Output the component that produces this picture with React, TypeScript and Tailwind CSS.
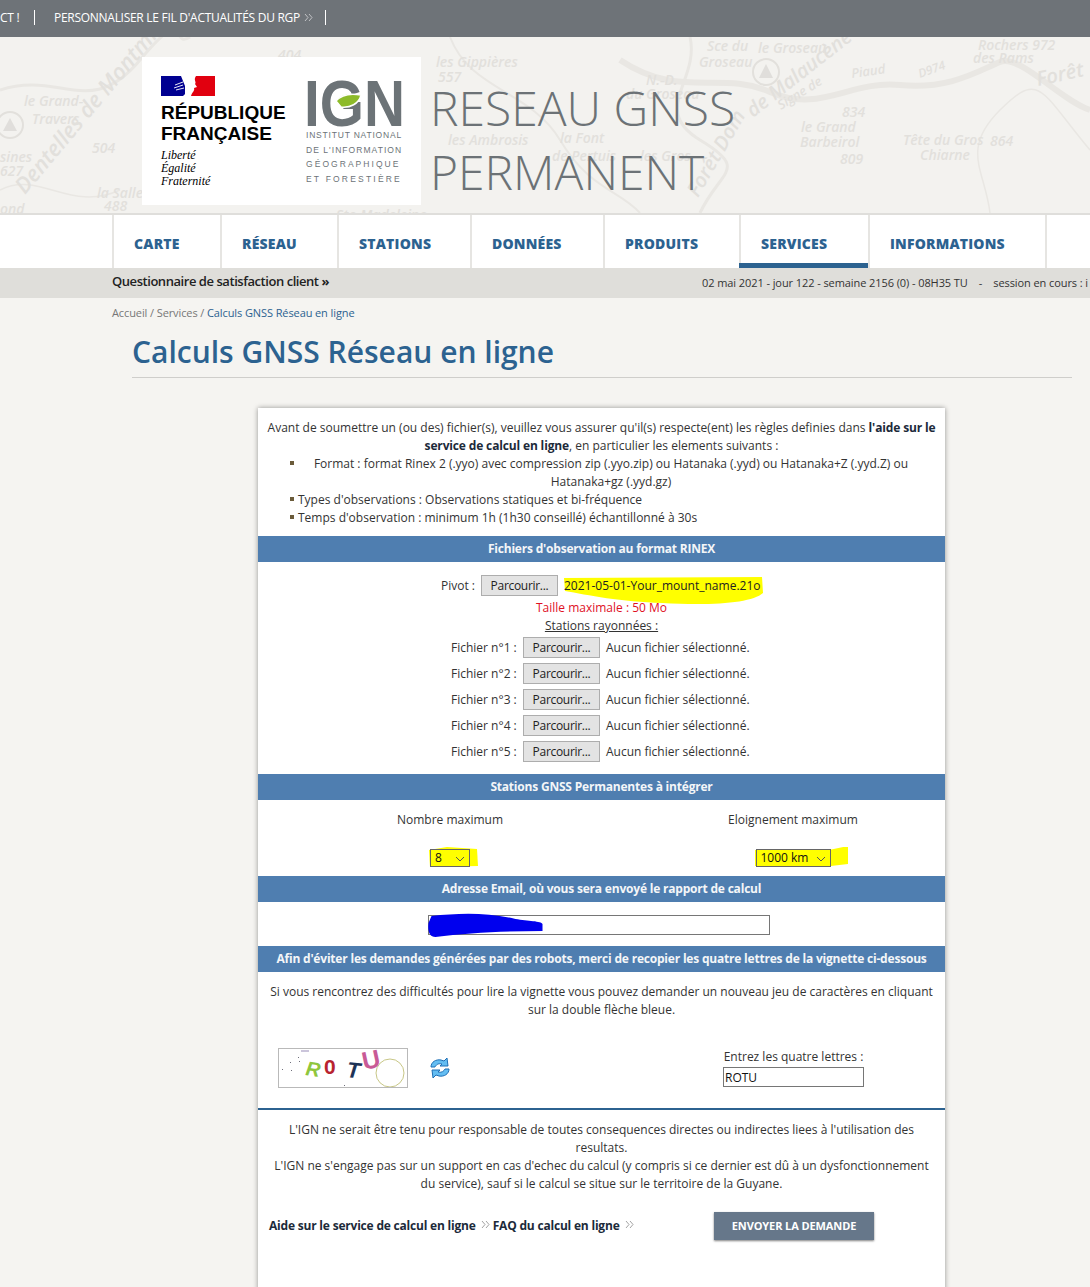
const navItems = [
  { label: "CARTE", width: "w-[108px]" },
  { label: "RÉSEAU", width: "w-[117px]" },
  { label: "STATIONS", width: "w-[133px]" },
  { label: "DONNÉES", width: "w-[133px]" },
  { label: "PRODUITS", width: "w-[136px]" },
  { label: "SERVICES", width: "w-[129px]", active: true },
  { label: "INFORMATIONS", width: "w-[177px]" },
];

const mapLabels: [string, number, number, number?, number?][] = [
  ["le Grand-", 24, 106],
  ["Travers", 32, 124],
  ["Dentelles de Montmirail", 25, 195, -50, 22],
  ["504", 92, 153],
  ["sines", 0, 162],
  ["627", 0, 176],
  ["la Salle", 97, 198],
  ["488", 104, 211],
  ["ond", 0, 214],
  ["404", 278, 60],
  ["les Gippières", 436, 67],
  ["557", 438, 82],
  ["les Ambrosis", 448, 145],
  ["la Font", 560, 143],
  ["de Pertuis", 552, 161],
  ["les Gros", 640, 161],
  ["N.-D.", 646, 85],
  ["du Groseau", 626, 99],
  ["Sce du", 707, 51],
  ["Groseau", 699, 67],
  ["le Groseau", 758, 53],
  ["de Malaucène", 753, 118, -38, 20],
  ["Signe de", 781, 110, -32, 13],
  ["Forêt Dom", 698, 198, -60, 20],
  ["Piaud", 852, 78, -8, 13],
  ["D974", 920, 78, -20, 12],
  ["Rochers 972", 978, 50],
  ["des Rams", 973, 63],
  ["Forêt", 1038, 86, -12, 20],
  ["834", 842, 117],
  ["le Grand", 801, 132],
  ["Barbeirol", 800, 147],
  ["809", 840, 164],
  ["Tête du Gros", 903, 145],
  ["Chiarne", 920, 160],
  ["864", 990, 146],
  ["Ste-Madeleine", 336, 220],
];

const fileRows = [1, 2, 3, 4, 5];

function MapBackground() {
  return (
    <svg className="absolute inset-0 h-full w-full" viewBox="0 37 1090 176" preserveAspectRatio="none">
      <rect x="0" y="37" width="1090" height="176" fill="#f3f2ef" />
      <g fill="none" stroke="#e9e7e3" strokeWidth="3">
        <path d="M0 90 C60 70 90 120 140 60 S170 50 190 37" />
        <path d="M620 60 C680 100 720 70 770 92 S850 80 900 85 S980 70 1000 62 S1060 100 1090 110" strokeWidth="6" />
        <path d="M690 37 C700 80 650 110 700 140 S720 170 700 213" />
        <path d="M990 213 C985 170 960 150 1000 110 S1040 90 1090 150" strokeWidth="1.5" />
        <path d="M450 37 C470 90 530 90 560 140 S620 190 640 213" strokeWidth="2" />
        <path d="M0 190 C40 170 70 213 120 190" strokeWidth="1.5" />
      </g>
      <g fill="none" stroke="#e2e0dc" strokeWidth="2">
        <circle cx="766" cy="72" r="13" />
        <circle cx="10" cy="125" r="13" />
      </g>
      <path d="M759 78 L766 64 L773 78 Z" fill="#e0dedb" />
      <path d="M3 131 L10 118 L17 131 Z" fill="#e0dedb" />
      <g fill="#e2e0dc" fontFamily="'Open Sans', sans-serif" fontStyle="italic" fontWeight="600">
        {mapLabels.map(([text, x, y, angle, size]) => (
          <text key={text + x} x={x} y={y} fontSize={size ?? 14} transform={angle ? `rotate(${angle} ${x} ${y})` : undefined}>
            {text}
          </text>
        ))}
      </g>
    </svg>
  );
}

function DoubleChevron({ color = "#c9cbcd" }: { color?: string }) {
  return (
    <svg width="9" height="9" viewBox="0 0 9 9" fill="none" stroke={color} strokeWidth="0.9" className="inline-block shrink-0">
      <path d="M1 1 L4 4.5 L1 8" />
      <path d="M5 1 L8 4.5 L5 8" />
    </svg>
  );
}

function RfLogo() {
  return (
    <div className="w-[145px] shrink-0">
      <svg width="54" height="20" viewBox="0 0 54 20" className="block">
        <rect x="0" y="0" width="24" height="20" fill="#000091" />
        <rect x="28" y="0" width="26" height="20" fill="#e1000f" />
        <path d="M20 0 H35 C32 4 36 6 34 8 L36 11 L33 12 C34 15 31 16 30 20 H22 C27 16 27 12 24 10 Z" fill="#ffffff" />
        <path d="M14 9 L22 6 M13 12 L22 9 M15 14 L23 12" stroke="#ffffff" strokeWidth="0.9" />
      </svg>
      <div className="mt-[6px] text-[19px] font-bold leading-[21px] text-black font-['Liberation_Sans',sans-serif]">
        RÉPUBLIQUE
        <br />
        FRANÇAISE
      </div>
      <div className="mt-[5px] text-[12px] italic leading-[13px] text-black font-['Liberation_Serif',serif]">
        Liberté
        <br />
        Égalité
        <br />
        Fraternité
      </div>
    </div>
  );
}

function IgnLogo() {
  return (
    <div className="w-[97px] shrink-0 pt-[3px]">
      <svg width="97" height="48" viewBox="0 0 97 48" className="block overflow-visible">
        <text x="-2" y="47" fontSize="64" fontWeight="700" fill="#6c7377" fontFamily="'Liberation Sans', sans-serif" textLength="101" lengthAdjust="spacingAndGlyphs">
          IGN
        </text>
        <path d="M30 22 C36 15 44 14 55 16 C53 25 44 29 35 28 Z" fill="#8dbb2a" />
        <path d="M30 22 C36 15 44 14 55 16 C53 25 44 29 35 28 Z" fill="none" stroke="#ffffff" strokeWidth="1.5" />
      </svg>
      <div className="mt-[2px] flex flex-col gap-[2.6px] whitespace-nowrap text-[8.5px] leading-[12px] text-[#6c7377] font-['Liberation_Sans',sans-serif]">
        <span className="tracking-[0.8px]">INSTITUT NATIONAL</span>
        <span className="tracking-[1.05px]">DE L'INFORMATION</span>
        <span className="tracking-[2.05px]">GÉOGRAPHIQUE</span>
        <span className="tracking-[2.2px]">ET FORESTIÈRE</span>
      </div>
    </div>
  );
}

function Band({ children }: { children: React.ReactNode }) {
  return (
    <div className="flex h-[26px] items-center justify-center whitespace-nowrap bg-[#4f7eb0] text-[12px] font-bold tracking-[-0.2px] text-[#f4f6f8]">
      {children}
    </div>
  );
}

function BrowseButton() {
  return (
    <button className="h-[21px] w-[77px] shrink-0 border border-[#adadad] bg-[#e3e3e3] text-[12px] leading-none tracking-[-0.3px] text-[#222]">
      Parcourir...
    </button>
  );
}

function Bullet() {
  return <span className="mt-[6px] h-[4px] w-[4px] shrink-0 bg-[#6b5b3a]" />;
}

function Chevron() {
  return (
    <svg className="pointer-events-none absolute right-[5px] top-[7px]" width="10" height="6" viewBox="0 0 10 6" fill="none" stroke="#555" strokeWidth="1">
      <path d="M1 1 L5 5 L9 1" />
    </svg>
  );
}

function YellowSelect({ value, width }: { value: string; width: string }) {
  return (
    <div className={`relative h-[18px] ${width}`}>
      <select className="h-full w-full appearance-none border border-[#666] bg-[#ffff00] pl-[4px] text-[12px] leading-none text-[#111] outline-none" defaultValue={value}>
        <option>{value}</option>
      </select>
      <Chevron />
    </div>
  );
}

function Captcha() {
  return (
    <div className="h-[40px] w-[130px] shrink-0 border border-[#b9b9b9] bg-white">
      <svg width="128" height="38" viewBox="0 0 128 38" className="block">
        <circle cx="111" cy="24" r="14" fill="none" stroke="#b9b867" strokeWidth="0.8" />
        <path d="M22 2 H30" stroke="#6a5a9a" strokeWidth="0.7" />
        <g fill="#334" opacity="0.7">
          <rect x="11" y="13" width="1" height="1" />
          <rect x="19" y="8" width="1" height="1" />
          <rect x="20" y="12" width="1" height="1" />
          <rect x="3" y="20" width="1" height="1" />
          <rect x="12" y="21" width="1" height="1" />
          <rect x="65" y="36" width="1" height="1" />
        </g>
        <g fontFamily="'Liberation Sans', sans-serif" fontWeight="700" fontStyle="italic">
          <text x="26" y="26" fontSize="20" fill="#8fc63d" transform="rotate(8 26 26)">R</text>
          <text x="45" y="25" fontSize="21" fill="#b8232f" fontStyle="normal">0</text>
          <text x="67" y="28" fontSize="22" fill="#1d3357" transform="rotate(6 67 28)">T</text>
          <text x="85" y="21" fontSize="25" fill="#c85a96" fontStyle="normal" transform="rotate(-12 85 21)">U</text>
        </g>
      </svg>
    </div>
  );
}

function RefreshIcon() {
  return (
    <svg width="22" height="22" viewBox="0 0 22 22" className="shrink-0">
      <g fill="#63bdf2" stroke="#1f6fb5" strokeWidth="1" strokeLinejoin="round">
        <path d="M2 10 C2 5 7 2 12 3 L15 4 L18 1 L19 9 L11 9 L13 7 C9 6 7 8 6 10 Z" />
        <path d="M20 12 C20 17 15 20 10 19 L7 18 L4 21 L3 13 L11 13 L9 15 C13 16 15 14 16 12 Z" />
      </g>
    </svg>
  );
}

export default function App() {
  return (
    <div className="h-[1287px] w-[1090px] overflow-hidden bg-[#f5f4f1] font-['Open_Sans',sans-serif] text-[12px] leading-[18px] text-[#333]">
      <div className="flex h-[37px] items-center bg-[#6e7378] pb-[2px] text-[12px] tracking-[-0.28px] text-white">
        <span className="w-[34px] whitespace-nowrap">CT !</span>
        <span className="h-[15px] w-px bg-white" />
        <span className="ml-[19px] flex items-center gap-[4px] whitespace-nowrap">
          PERSONNALISER LE FIL D'ACTUALITÉS DU RGP <DoubleChevron />
        </span>
        <span className="ml-[12px] h-[15px] w-px bg-white" />
      </div>

      <header className="relative h-[176px]">
        <MapBackground />
        <div className="relative flex pl-[142px] pt-[20px]">
          <div className="flex h-[148px] w-[279px] bg-white pl-[19px] pt-[19px]">
            <RfLogo />
            <IgnLogo />
          </div>
          <h1 className="ml-[9px] mt-[19px] text-[48px] font-light leading-[64px] text-[#6c7276]">
            RESEAU GNSS
            <br />
            PERMANENT
          </h1>
        </div>
      </header>

      <nav className="flex h-[55px] border-t-2 border-[#dfdedb] bg-white pl-[112px]">
        {navItems.map((item) => (
          <div key={item.label} className={`relative flex ${item.width} items-center border-l-2 border-[#e6e5e2] pl-[20px] pt-[4px]`}>
            <span className="text-[14px] font-extrabold tracking-[0.2px] text-[#2c6290]">{item.label}</span>
            {item.active && <span className="absolute -left-[2px] right-0 bottom-0 h-[5px] bg-[#2c6290]" />}
          </div>
        ))}
        <div className="border-l-2 border-[#e6e5e2]" />
      </nav>

      <div className="flex h-[30px] items-center whitespace-nowrap bg-[#dfdeda] pl-[112px]">
        <span className="-mt-[4px] w-[590px] shrink-0 text-[13px] font-semibold tracking-[-0.45px] text-[#222]">
          Questionnaire de satisfaction client <span className="font-bold">»</span>
        </span>
        <span className="text-[11px] tracking-[-0.08px] text-[#333]">
          02 mai 2021 - jour 122 - semaine 2156 (0) - 08H35 TU
          <span className="mx-[11px]">-</span>
          session en cours : i
        </span>
      </div>

      <div className="pl-[112px] pt-[6px] text-[11px] leading-[18px] tracking-[-0.1px] text-[#777]">
        Accueil / Services / <span className="text-[#2c6290]">Calculs GNSS Réseau en ligne</span>
      </div>

      <h2 className="ml-[132px] mr-[18px] mt-[9px] border-b border-[#cfcecb] pb-[5px] text-[30px] font-semibold leading-[41px] text-[#2c6290]">
        Calculs GNSS Réseau en ligne
      </h2>

      <main className="ml-[258px] mt-[30px] h-[1000px] w-[687px] bg-white shadow-[0_0_5px_rgba(0,0,0,0.4)]">
        <div className="px-[5px] pt-[11px] text-center">
          Avant de soumettre un (ou des) fichier(s), veuillez vous assurer qu'il(s) respecte(ent) les règles definies dans{" "}
          <b className="tracking-[-0.15px] text-[#1c2a3a]">l'aide sur le service de calcul en ligne</b>, en particulier les elements suivants :
          <div className="flex pl-[27px] pr-[12px]">
            <Bullet />
            <span className="flex-1">Format : format Rinex 2 (.yyo) avec compression zip (.yyo.zip) ou Hatanaka (.yyd) ou Hatanaka+Z (.yyd.Z) ou Hatanaka+gz (.yyd.gz)</span>
          </div>
          <div className="flex gap-[4px] pl-[27px] text-left">
            <Bullet />
            <span>Types d'observations : Observations statiques et bi-fréquence</span>
          </div>
          <div className="flex gap-[4px] pl-[27px] text-left">
            <Bullet />
            <span>Temps d'observation : minimum 1h (1h30 conseillé) échantillonné à 30s</span>
          </div>
        </div>

        <div className="mt-[9px]">
          <Band>Fichiers d'observation au format RINEX</Band>
        </div>

        <div className="relative mt-[13px] flex h-[21px] items-center pl-[183px]">
          <svg className="absolute left-[304px] top-0 h-[34px] w-[202px]" viewBox="0 0 202 34">
            <path d="M2 3 L200 2 L201 18 C190 28 150 31 100 28 C60 27 25 20 3 16 Z" fill="#ffff00" />
          </svg>
          <span className="relative w-[40px] whitespace-nowrap">Pivot :</span>
          <span className="relative flex items-center">
            <BrowseButton />
            <span className="ml-[6px] whitespace-nowrap text-[#222]">2021-05-01-Your_mount_name.21o</span>
          </span>
        </div>
        <div className="relative mt-[3px] text-center text-[#e0101f]">Taille maximale : 50 Mo</div>
        <div className="text-center underline">Stations rayonnées :</div>
        <div className="mt-[2px] flex flex-col gap-[5px] pl-[193px]">
          {fileRows.map((n) => (
            <div key={n} className="flex h-[21px] items-center whitespace-nowrap">
              <span className="w-[72px]">Fichier n°{n} :</span>
              <BrowseButton />
              <span className="ml-[6px]">Aucun fichier sélectionné.</span>
            </div>
          ))}
        </div>

        <div className="mt-[12px]">
          <Band>Stations GNSS Permanentes à intégrer</Band>
        </div>

        <div className="flex h-[76px] pt-[11px]">
          <div className="ml-[92px] flex w-[200px] flex-col items-center">
            <span>Nombre maximum</span>
            <div className="relative mt-[20px]">
              <svg className="absolute -left-[4px] -top-[2px] h-[21px] w-[55px]" viewBox="0 0 53 21">
                <path d="M2 3 L20 0 L50 2 L51 19 L3 20 Z" fill="#ffff00" />
              </svg>
              <div className="relative">
                <YellowSelect value="8" width="w-[40px]" />
              </div>
            </div>
          </div>
          <div className="ml-[143px] flex w-[200px] flex-col items-center">
            <span>Eloignement maximum</span>
            <div className="relative mt-[20px]">
              <svg className="absolute -left-[1px] -top-[2px] h-[21px] w-[94px]" viewBox="0 0 94 21">
                <path d="M0 3 H74 L93 -1 L93 17 L76 19 H0 Z" fill="#ffff00" />
              </svg>
              <div className="relative">
                <YellowSelect value="1000 km" width="w-[75px]" />
              </div>
            </div>
          </div>
        </div>

        <Band>Adresse Email, où vous sera envoyé le rapport de calcul</Band>

        <div className="relative flex h-[44px] justify-start pl-[170px] pt-[13px]">
          <input className="h-[20px] w-[342px] border border-[#767676] bg-white" readOnly />
          <svg className="absolute left-[169px] top-[11px] h-[24px] w-[117px]" viewBox="0 0 116 24">
            <path d="M4 3 C30 0 60 -1 88 6 C100 8 114 8 115 11 L115 18 C80 18 40 20 8 24 C2 24 0 18 1 10 Z" fill="#0000ee" />
          </svg>
        </div>

        <Band>Afin d'éviter les demandes générées par des robots, merci de recopier les quatre lettres de la vignette ci-dessous</Band>

        <p className="px-[10px] pt-[11px] text-center">
          Si vous rencontrez des difficultés pour lire la vignette vous pouvez demander un nouveau jeu de caractères en cliquant sur la double flèche bleue.
        </p>

        <div className="mt-[29px] flex h-[40px] items-center pl-[20px]">
          <Captcha />
          <div className="ml-[21px]">
            <RefreshIcon />
          </div>
          <div className="ml-[272px] flex flex-col items-center self-start">
            <span className="mb-[1px] leading-[18px]">Entrez les quatre lettres :</span>
            <input className="h-[20px] w-[141px] border border-[#767676] bg-white px-[1px] text-[12px] text-[#111]" defaultValue="ROTU" />
          </div>
        </div>

        <div className="mt-[20px] border-t-2 border-[#2c6290] px-[13px] pt-[11px] text-center">
          L'IGN ne serait être tenu pour responsable de toutes consequences directes ou indirectes liees à l'utilisation des resultats.
          <br />
          L'IGN ne s'engage pas sur un support en cas d'echec du calcul (y compris si ce dernier est dû à un dysfonctionnement du service), sauf si le calcul se situe sur le territoire de la Guyane.
        </div>

        <div className="mt-[19px] flex h-[28px] items-center pl-[11px] pr-[71px] text-[12px] font-bold tracking-[-0.2px] text-[#1c2a3a]">
          <span className="whitespace-nowrap">Aide sur le service de calcul en ligne</span>
          <span className="ml-[5px] mr-[3px] -translate-y-[2px]">
            <DoubleChevron color="#999999" />
          </span>
          <span className="whitespace-nowrap">FAQ du calcul en ligne</span>
          <span className="ml-[5px] -translate-y-[2px]">
            <DoubleChevron color="#999999" />
          </span>
          <button className="ml-auto h-[28px] w-[160px] bg-[#66778a] text-[11px] font-bold tracking-[-0.1px] text-white shadow-[0_1px_2px_rgba(0,0,0,0.5)]">
            ENVOYER LA DEMANDE
          </button>
        </div>
      </main>
    </div>
  );
}
